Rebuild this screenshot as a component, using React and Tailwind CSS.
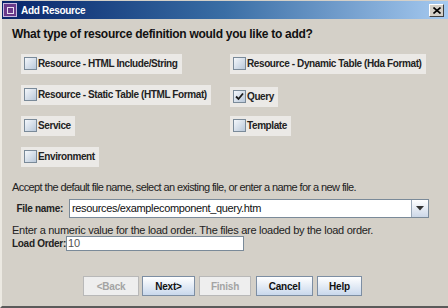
import React, { useState } from 'react';

// 资源类型选项
const options = [
  ['Resource - HTML Include/String', 'Resource - Dynamic Table (Hda Format)'],
  ['Resource - Static Table (HTML Format)', 'Query'],
  ['Service', 'Template'],
  ['Environment', null],
];

function Check({ label, checked, onToggle }) {
  return (
    <div
      className="inline-flex items-center h-[20px] pl-[3px] pr-[4px] bg-[#ebe9e6] cursor-default whitespace-nowrap"
      onClick={onToggle}
    >
      <span className="w-[13px] h-[13px] border border-[#7a8a99] bg-gradient-to-br from-[#f4f7fb] to-[#b9c8da] flex items-center justify-center">
        {checked && (
          <svg width="9" height="9" viewBox="0 0 9 9">
            <path d="M1 4.5 L3.5 7 L8 1.5" stroke="#1a1a1a" strokeWidth="1.8" fill="none" />
          </svg>
        )}
      </span>
      <span className="ml-[1px] text-[10px] font-bold tracking-[-0.4px] text-[#222]">{label}</span>
    </div>
  );
}

function Btn({ children, disabled, w, ml }) {
  return (
    <button
      className={
        'h-[20px] border text-[10px] font-bold tracking-[-0.2px] flex items-center justify-center ' +
        w + ' ' + ml + ' ' +
        (disabled
          ? 'border-[#b8b8b8] bg-[#eeeeee] text-[#a3a3a3]'
          : 'border-[#7d8ea3] bg-gradient-to-b from-[#ffffff] to-[#c9d8ec] text-[#111]')
      }
    >
      {children}
    </button>
  );
}

export default function App() {
  const [checked, setChecked] = useState({ Query: true });
  const toggle = (k) => setChecked((c) => ({ ...c, [k]: !c[k] }));

  return (
    <div
      className="w-[448px] h-[308px] bg-[#d4d0c8] flex flex-col border-l-[2px] border-l-[#ece9e2] border-b-[2px] border-b-[#5a5a5a] overflow-hidden"
      style={{ fontFamily: '"Liberation Sans", Arial, sans-serif' }}
    >
      {/* 标题栏 */}
      <div className="h-[18px] mt-[1px] flex items-center bg-gradient-to-r from-[#0a246a] via-[#3a6ea5] to-[#a6caf0] pl-[1px] pr-[4px]">
        <span className="w-[14px] h-[14px] bg-[#6a3a8a] border border-[#c8b8e0] flex items-center justify-center">
          <span className="w-[7px] h-[7px] border border-[#e8e0f0]" />
        </span>
        <span className="ml-[4px] text-white text-[10px] font-bold tracking-[-0.3px]">Add Resource</span>
        <span className="ml-auto w-[15px] h-[13px] bg-[#d4d0c8] border border-t-white border-l-white border-r-[#404040] border-b-[#404040] flex items-center justify-center">
          <svg width="8" height="7" viewBox="0 0 8 7">
            <path d="M0.5 0.5 L7.5 6.5 M7.5 0.5 L0.5 6.5" stroke="#000" strokeWidth="1.6" />
          </svg>
        </span>
      </div>

      <div className="flex flex-col px-[10px]">
        <div className="mt-[6px] h-[18px] leading-[18px] text-[12px] font-bold tracking-[-0.28px] text-[#111] whitespace-nowrap">
          What type of resource definition would you like to add?
        </div>

        {/* 选项网格 */}
        <div className="mt-[10px] grid grid-cols-[209px_1fr] gap-y-[11px] pl-[9px]">
          {options.map((row, i) => (
            <React.Fragment key={i}>
              <div className="h-[20px]">
                <Check label={row[0]} checked={!!checked[row[0]]} onToggle={() => toggle(row[0])} />
              </div>
              <div className="h-[20px]">
                {row[1] && (
                  <Check label={row[1]} checked={!!checked[row[1]]} onToggle={() => toggle(row[1])} />
                )}
              </div>
            </React.Fragment>
          ))}
        </div>

        <div className="mt-[14px] leading-[14px] text-[11px] tracking-[-0.6px] text-[#222] whitespace-nowrap">
          Accept the default file name, select an existing file, or enter a name for a new file.
        </div>

        {/* 文件名 */}
        <div className="mt-[5px] flex items-center">
          <span className="w-[51px] text-right text-[10px] font-bold tracking-[-0.3px] text-[#222]">File name:</span>
          <div className="ml-[6px] w-[360px] h-[19px] flex border border-[#7a8a99] bg-white">
            <span className="flex-1 pl-[2px] text-[11px] leading-[17px] tracking-[-0.35px] text-[#111]">
              resources/examplecomponent_query.htm
            </span>
            <span className="w-[17px] bg-gradient-to-b from-[#ffffff] to-[#cdd8e8] border-l border-[#9aa8b8] flex items-center justify-center">
              <svg width="8" height="5" viewBox="0 0 8 5">
                <path d="M0 0 H8 L4 4.5 Z" fill="#333" />
              </svg>
            </span>
          </div>
        </div>

        <div className="mt-[6px] leading-[12px] text-[11px] tracking-[-0.28px] text-[#222] whitespace-nowrap">
          Enter a numeric value for the load order. The files are loaded by the load order.
        </div>

        {/* 加载顺序 */}
        <div className="flex items-center">
          <span className="w-[52px] text-[10px] font-bold tracking-[-0.3px] text-[#222] whitespace-nowrap">Load Order:</span>
          <div className="ml-[2px] w-[178px] h-[15px] border border-[#7a8a99] bg-white pl-[1px] text-[11px] leading-[13px] text-[#555]">
            10
          </div>
        </div>

        {/* 按钮 */}
        <div className="mt-[25px] flex pl-[71px]">
          <Btn disabled w="w-[56px]" ml="ml-0">&lt;Back</Btn>
          <Btn w="w-[53px]" ml="ml-[3px]">Next&gt;</Btn>
          <Btn disabled w="w-[52px]" ml="ml-[4px]">Finish</Btn>
          <Btn w="w-[57px]" ml="ml-[5px]">Cancel</Btn>
          <Btn w="w-[45px]" ml="ml-[4px]">Help</Btn>
        </div>
      </div>
    </div>
  );
}
